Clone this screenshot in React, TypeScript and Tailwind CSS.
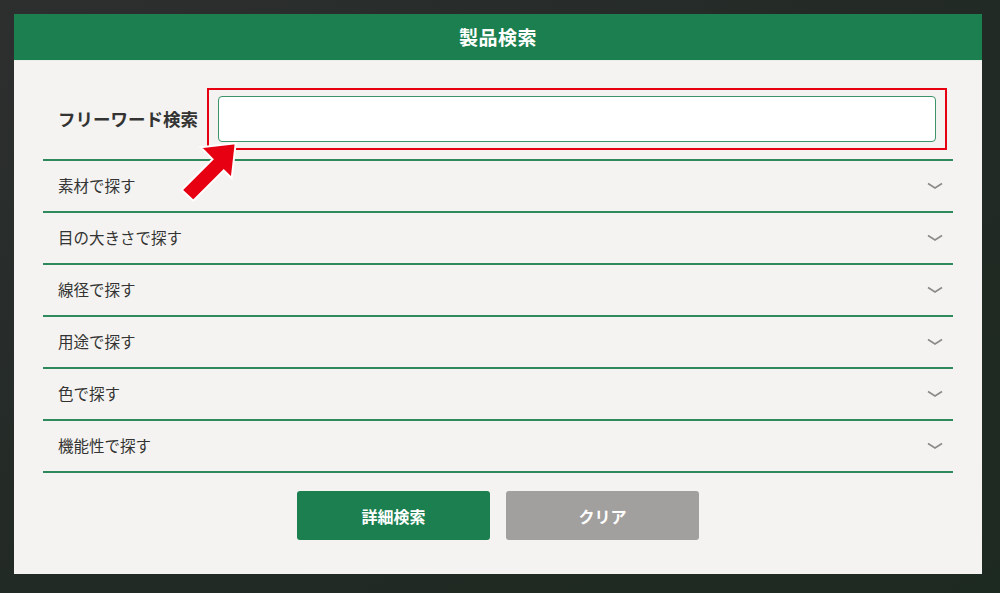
import { useState } from "react";

const rows = [
  "素材で探す",
  "目の大きさで探す",
  "線径で探す",
  "用途で探す",
  "色で探す",
  "機能性で探す",
];

const font = { fontFamily: '"Noto Sans CJK JP", "Noto Sans", sans-serif' };

function Chevron() {
  return (
    <svg width="16" height="8" viewBox="0 0 16 8" className="text-[#8a8a8a]">
      <polyline points="1,1.5 8,6 15,1.5" fill="none" stroke="currentColor" strokeWidth="1.6" />
    </svg>
  );
}

function Arrow() {
  return (
    <svg
      width="80"
      height="80"
      viewBox="0 0 80 80"
      className="absolute left-[170px] top-[130px] pointer-events-none"
    >
      <polygon
        points="65.7,13.3 61.7,48.3 53.7,40.3 23.3,70.7 11.7,60 42.5,29.2 30.7,17.3"
        fill="#e60012"
        stroke="#ffffff"
        strokeWidth="2"
        strokeLinejoin="miter"
      />
    </svg>
  );
}

export default function App() {
  const [word, setWord] = useState("");

  return (
    <div
      className="relative w-[1000px] h-[593px] overflow-hidden bg-gradient-to-br from-[#2d2f2f] via-[#222a25] to-[#1d2a21]"
      style={font}
    >
      <div className="absolute left-[14px] top-[14px] w-[968px] h-[560px] flex flex-col bg-[#f4f3f1]">
        <header className="h-[47px] shrink-0 flex items-center justify-center bg-[#1b7f4f] border-b border-[#e8f0ea]">
          <h1 className="text-[19px] font-bold text-white tracking-wide">製品検索</h1>
        </header>

        <div className="px-[29px] flex flex-col">
          <div className="h-[100px] flex items-start pt-[27px] pl-[15px] border-b-2 border-[#2e8a5d]">
            <div className="h-[62px] flex items-center">
              <span className="w-[149px] text-[17.5px] font-bold text-[#333]">フリーワード検索</span>
            </div>
            <div className="w-[740px] h-[62px] border-2 border-[#e60012] px-[9px] py-[6px]">
              <input
                value={word}
                onChange={(e) => setWord(e.target.value)}
                className="w-full h-full rounded-[4px] border border-[#3d9469] bg-white px-3 text-[15px] outline-none"
              />
            </div>
          </div>

          {rows.map((r) => (
            <button
              key={r}
              type="button"
              className="h-[52px] flex items-center justify-between pl-[15px] pr-[10px] border-b-2 border-[#2e8a5d] text-left"
            >
              <span className="text-[15.5px] text-[#333]">{r}</span>
              <Chevron />
            </button>
          ))}

          <div className="flex justify-center gap-[16px] pt-[18px]">
            <button
              type="button"
              className="w-[193px] h-[49px] rounded-[3px] bg-[#1b7f4f] text-white text-[16px] font-bold"
            >
              詳細検索
            </button>
            <button
              type="button"
              onClick={() => setWord("")}
              className="w-[193px] h-[49px] rounded-[3px] bg-[#a1a09e] text-white text-[16px] font-bold"
            >
              クリア
            </button>
          </div>
        </div>
      </div>

      <Arrow />
    </div>
  );
}
